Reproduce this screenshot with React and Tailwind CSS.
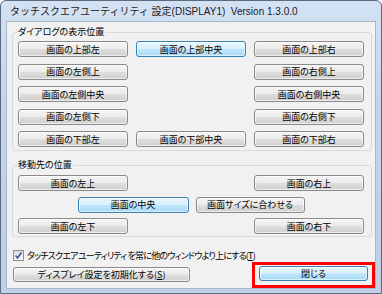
import React from "react";

const FONT = "font-['Noto_Sans_CJK_JP','Noto_Sans',sans-serif] [font-feature-settings:'palt']";

function Btn({ children, blue = false, className = "" }) {
  const skin = blue
    ? "border-[#3c7fb1] bg-[linear-gradient(#eaf6fd_0%,#d9f0fc_48%,#bee6fd_52%,#a7d9f5_100%)]"
    : "border-[#8a8a8a] bg-[linear-gradient(#f4f4f4_0%,#ececec_48%,#dedede_52%,#d0d0d0_100%)]";
  return (
    <div
      className={
        "flex items-center justify-center rounded-[3px] border text-[9px] leading-none text-black shadow-[inset_0_0_0_1px_rgba(255,255,255,0.6)] " +
        skin +
        " " +
        className
      }
    >
      {children}
    </div>
  );
}

function Checkbox() {
  return (
    <div className="flex h-[11px] w-[11px] items-center justify-center border border-[#8f8f8f] bg-[linear-gradient(#dcdcdc,#fbfbfb)]">
      <svg width="9" height="9" viewBox="0 0 9 9">
        <path d="M1.5 4.5 L3.5 7 L7.5 1.5" fill="none" stroke="#3a5694" strokeWidth="1.6" />
      </svg>
    </div>
  );
}

export default function App() {
  return (
    <div className={"h-[294px] w-[382px] bg-white " + FONT}>
      <div className="flex h-full w-full flex-col rounded-t-[6px] border border-[#5b6b7d] bg-[linear-gradient(#d2e2f3,#c1d4ea_40%,#bdd0e7)] px-[5px] pb-[4px]">
        <div className="flex h-[20px] items-center whitespace-pre pl-[4px] pt-[1px] font-['Liberation_Sans','Noto_Sans_CJK_JP',sans-serif] text-[10px] leading-none text-[#1b1b1b] [font-feature-settings:normal]">
          {"タッチスクエアユーティリティ 設定(DISPLAY1)  Version 1.3.0.0"}
        </div>
        <div className="flex flex-1 flex-col border border-[#a9b8c9] bg-[#f1f1f1]">
          <fieldset className="ml-[5px] mr-[3px] mt-[4px] rounded-[3px] border border-[#d3dbe3] pb-[3px] pl-[5px] pr-[7px]">
            <legend className="-ml-[1px] px-[1px] text-[9px] leading-[12px]">ダイアログの表示位置</legend>
            <div className="mt-[3px] grid grid-cols-[110px_110px_110px] gap-x-[8px] gap-y-[6.5px]">
              <Btn className="h-[16px]">画面の上部左</Btn>
              <Btn blue className="h-[16px]">画面の上部中央</Btn>
              <Btn className="h-[16px]">画面の上部右</Btn>
              <Btn className="h-[16px]">画面の左側上</Btn>
              <div />
              <Btn className="h-[16px]">画面の右側上</Btn>
              <Btn className="h-[16px]">画面の左側中央</Btn>
              <div />
              <Btn className="h-[16px]">画面の右側中央</Btn>
              <Btn className="h-[16px]">画面の左側下</Btn>
              <div />
              <Btn className="h-[16px]">画面の右側下</Btn>
              <Btn className="h-[16px]">画面の下部左</Btn>
              <Btn className="h-[16px]">画面の下部中央</Btn>
              <Btn className="h-[16px]">画面の下部右</Btn>
            </div>
          </fieldset>
          <fieldset className="ml-[5px] mr-[3px] mt-[8px] rounded-[3px] border border-[#d3dbe3] pb-[2px] pl-[5px] pr-[7px]">
            <legend className="-ml-[1px] px-[1px] text-[9px] leading-[12px]">移動先の位置</legend>
            <div className="mt-[4px] flex flex-col gap-y-[5.5px]">
              <div className="flex justify-between">
                <Btn className="h-[16px] w-[110px]">画面の左上</Btn>
                <Btn className="h-[16px] w-[110px]">画面の右上</Btn>
              </div>
              <div className="flex justify-center gap-x-[7px]">
                <Btn blue className="h-[16px] w-[111px] border-[#2c628b] bg-[linear-gradient(#e5f4fc_0%,#c4e5f6_48%,#98d1ef_52%,#68b3db_100%)]">画面の中央</Btn>
                <Btn className="h-[16px] w-[109px]">画面サイズに合わせる</Btn>
              </div>
              <div className="flex justify-between">
                <Btn className="h-[16px] w-[110px]">画面の左下</Btn>
                <Btn className="h-[16px] w-[110px]">画面の右下</Btn>
              </div>
            </div>
          </fieldset>
          <div className="ml-[6px] mt-[13px] flex items-center gap-x-[3px] text-[9px] leading-none">
            <Checkbox />
            <span className="tracking-[-0.8px]">タッチスクエアユーティリティ を常に他のウィンドウより上にする(<span className="underline">T</span>)</span>
          </div>
          <div className="mt-auto flex items-end justify-between">
            <Btn className="mb-[6px] ml-[6px] h-[15px] w-[177px]">
              ディスプレイ設定を初期化する(<span className="underline">S</span>)
            </Btn>
            <div className="border-[3px] border-[#ff0000] px-[4px] pb-[4px] pt-[1px]">
              <Btn blue className="h-[15px] w-[109px]">閉じる</Btn>
            </div>
          </div>
        </div>
      </div>
    </div>
  );
}
